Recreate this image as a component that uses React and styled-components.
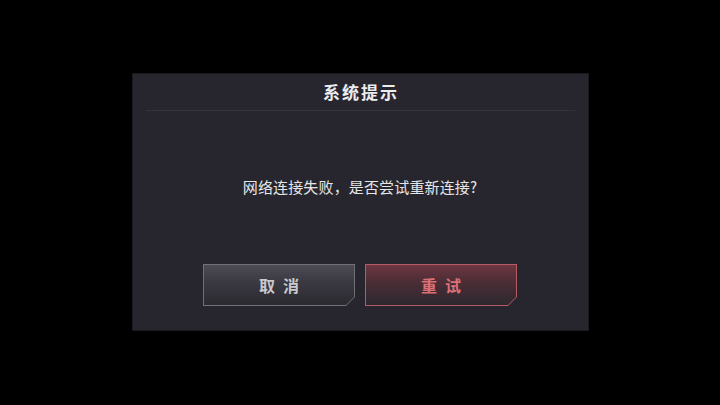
import React from 'react'
import styled, { createGlobalStyle } from 'styled-components'

const Global = createGlobalStyle`
  html, body {
    margin: 0;
    padding: 0;
    background: #000;
  }
  body {
    font-family: "Noto Sans CJK SC", "Noto Sans", sans-serif;
  }
`

const Screen = styled.div`
  width: 720px;
  height: 405px;
  background: #000;
  display: flex;
  align-items: flex-start;
  justify-content: center;
  padding-top: 74px;
  box-sizing: border-box;
`

const Panel = styled.div`
  width: 455px;
  height: 256px;
  background: #27262e;
  display: flex;
  flex-direction: column;
  box-sizing: border-box;
  box-shadow: 0 0 0 1px #1a191f;
`

const Header = styled.div`
  height: 36px;
  display: flex;
  align-items: center;
  justify-content: center;
  color: #ececee;
  font-size: 17px;
  font-weight: 700;
  letter-spacing: 2px;
  padding-left: 2px;
  padding-bottom: 1px;
  box-sizing: border-box;
`

const Divider = styled.div`
  height: 1px;
  margin: 0 13px;
  background: #34333b;
`

const Message = styled.div`
  margin-top: 66px;
  height: 20px;
  line-height: 20px;
  text-align: center;
  color: #e6e6e8;
  font-size: 15px;
  letter-spacing: 0.15px;
`

const Actions = styled.div`
  margin-top: 67px;
  display: flex;
  justify-content: center;
  gap: 10px;
`

const cut = 'polygon(0 0, 100% 0, 100% calc(100% - 9px), calc(100% - 9px) 100%, 0 100%)'
const innerCut = 'polygon(0 0, 100% 0, 100% calc(100% - 8px), calc(100% - 8px) 100%, 0 100%)'

const Frame = styled.div`
  width: 152px;
  height: 42px;
  padding: 1px;
  box-sizing: border-box;
  clip-path: ${cut};
  background: ${p => (p.$primary ? '#b85a64' : '#716f78')};
  cursor: pointer;
`

const Face = styled.div`
  width: 100%;
  height: 100%;
  clip-path: ${innerCut};
  background: ${p =>
    p.$primary
      ? 'linear-gradient(180deg, #6c3642 0%, #4a2d35 45%, #2d282f 100%)'
      : 'linear-gradient(180deg, #4c4b53 0%, #3a3941 45%, #2b2a31 100%)'};
  display: flex;
  align-items: center;
  justify-content: center;
  color: ${p => (p.$primary ? '#dc7076' : '#c8c8cc')};
  font-size: 16px;
  font-weight: 700;
  letter-spacing: 8px;
  padding-left: 8px;
  box-sizing: border-box;
`

function Button({ primary, children }) {
  return (
    <Frame $primary={primary}>
      <Face $primary={primary}>{children}</Face>
    </Frame>
  )
}

export default function App() {
  return (
    <>
      <Global />
      <Screen>
        <Panel>
          <Header>系统提示</Header>
          <Divider />
          <Message>网络连接失败，是否尝试重新连接?</Message>
          <Actions>
            <Button>取消</Button>
            <Button primary>重试</Button>
          </Actions>
        </Panel>
      </Screen>
    </>
  )
}
